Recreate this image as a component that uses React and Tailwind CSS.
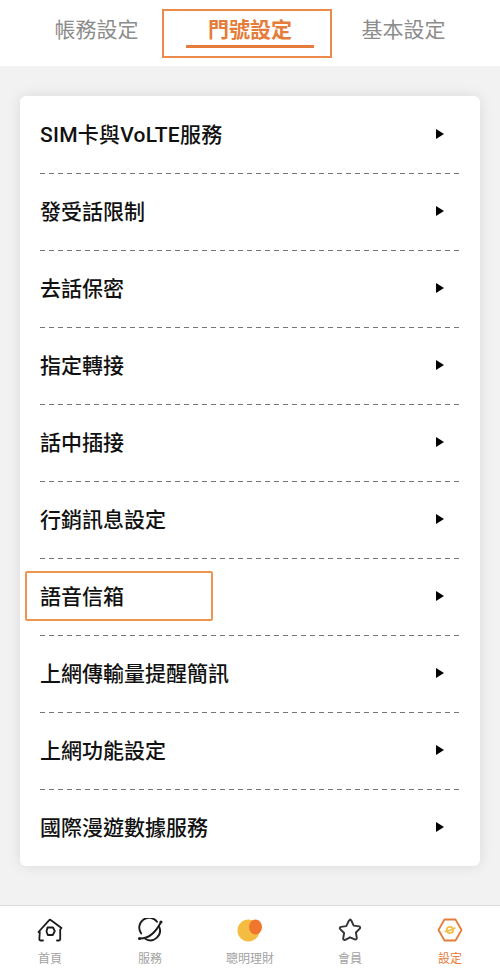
const rows = [
  "SIM卡與VoLTE服務",
  "發受話限制",
  "去話保密",
  "指定轉接",
  "話中插接",
  "行銷訊息設定",
  "語音信箱",
  "上網傳輸量提醒簡訊",
  "上網功能設定",
  "國際漫遊數據服務",
];

const HomeIcon = () => (
  <svg width="26" height="24" viewBox="0 0 26 24" fill="none" stroke="#1c1c1c" strokeWidth="1.800" strokeLinecap="round" strokeLinejoin="round">
    <path d="M6 22.500H3.500c-.8 0-1.200-.5-1.200-1.200l.5-7.300H1.500L12 2.300c.6-.6 1.400-.6 2 0L24.500 10l-1.300 1.500v9.800c0 .7-.4 1.200-1.200 1.200H20" />
    <path d="M10.500 9.500h5.500l1.800 3.500-2 4h-5l-1.300-3.500z" />
  </svg>
);

const PlanetIcon = () => (
  <svg width="26" height="24" viewBox="0 0 26 24" fill="none" stroke="#1c1c1c" strokeWidth="1.900" strokeLinecap="round">
    <path d="M4.200 15.500A9.700 9.700 0 0 1 20 3.800" />
    <path d="M22.300 9a9.700 9.700 0 0 1-13.800 12" />
    <path d="M2.500 20.500c8 .3 16-5.500 21.500-16.500" />
    <circle cx="2.500" cy="20.500" r="1.500" fill="#1c1c1c" stroke="none" />
    <circle cx="24" cy="4" r="1.500" fill="#1c1c1c" stroke="none" />
  </svg>
);

const CoinsIcon = () => (
  <svg width="26" height="24" viewBox="0 0 26 24">
    <circle cx="11.500" cy="12.500" r="11" fill="#f5bc42" />
    <ellipse cx="18.500" cy="9" rx="6.500" ry="7.500" fill="#f0752d" />
  </svg>
);

const StarIcon = () => (
  <svg width="24" height="24" viewBox="0 0 24 24" fill="none" stroke="#33343a" strokeWidth="1.900" strokeLinejoin="round">
    <path d="M12 1.500c.6 0 1 .4 1.300 1l2.400 5.100 5.400.8c1.100.2 1.500 1.400.7 2.200l-3.900 3.900.9 5.500c.2 1.100-1 1.900-2 1.400L12 19.300l-4.800 2.600c-1 .5-2.200-.3-2-1.400l.9-5.500-3.900-3.900c-.8-.8-.4-2 .7-2.200l5.400-.8 2.400-5.100c.3-.6.700-1 1.300-1z" />
  </svg>
);

const SettingIcon = () => (
  <svg width="26" height="24" viewBox="0 0 26 24" fill="none" strokeLinecap="round" strokeLinejoin="round">
    <path d="M7.500 1.500h11L24.500 12l-6 10.500h-11L1.500 12z" stroke="#e57c3a" strokeWidth="1.800" />
    <circle cx="13" cy="12" r="3.200" stroke="#f3be4a" strokeWidth="1.800" />
    <path d="M8 13.500c2-.2 7-2 10-3.500" stroke="#f3be4a" strokeWidth="1.400" />
  </svg>
);

const navItems = [
  { label: "首頁", icon: <HomeIcon /> },
  { label: "服務", icon: <PlanetIcon /> },
  { label: "聰明理財", icon: <CoinsIcon /> },
  { label: "會員", icon: <StarIcon /> },
  { label: "設定", icon: <SettingIcon />, active: true },
];

export default function App() {
  return (
    <div className="relative flex h-[975px] w-[500px] flex-col overflow-hidden bg-[#f2f2f2] font-['Roboto','Noto_Sans_CJK_TC',sans-serif]">
      {/* Tabs */}
      <div className="flex h-[66px] items-start justify-center bg-white">
        <div className="flex h-[60px] w-[153.5px] items-center justify-center pt-[2px] text-[21px] text-[#8c8c8c]">帳務設定</div>
        <div className="relative flex h-[60px] w-[153.5px] items-center justify-center pt-[2px] text-[21px] font-bold text-[#e57c3a]">
          門號設定
          <div className="absolute left-[13px] top-[45px] h-[3px] w-[128px] bg-[#e57c3a]" />
        </div>
        <div className="flex h-[60px] w-[153.5px] items-center justify-center pt-[2px] text-[21px] text-[#8c8c8c]">基本設定</div>
      </div>
      <div className="absolute left-[162px] top-[9px] h-[49px] w-[170px] border-2 border-[#ec8a4c]" />

      {/* Settings list */}
      <div className="flex-1 px-5 pt-[30px]">
        <div className="rounded-md bg-white px-5 shadow-[0_0_14px_rgba(0,0,0,0.1)]">
          {rows.map((row, i) => (
            <div key={row} className="relative flex h-[77px] items-center justify-between">
              <span className={`pt-[2px] text-[21px] font-medium leading-none text-[#111111] ${i === 0 ? "tracking-[0.25px]" : ""}`}>{row}</span>
              <svg width="8" height="10" viewBox="0 0 8 10" className="mr-[16px] mb-[1px]">
                <path d="M0 0l8 5-8 5z" fill="#000000" />
              </svg>
              {i < rows.length - 1 && (
                <div className="absolute bottom-[-1px] left-0 h-px w-full bg-[repeating-linear-gradient(90deg,#777_0,#777_5px,transparent_5px,transparent_9px)]" />
              )}
            </div>
          ))}
        </div>
      </div>
      <div className="absolute left-[25px] top-[571px] h-[50px] w-[188px] rounded-[2px] border-2 border-[#f0934f]" />

      {/* Bottom nav */}
      <div className="flex h-[70px] border-t border-[#dcdcdc] bg-white">
        {navItems.map((item) => (
          <div key={item.label} className="flex w-[100px] flex-col items-center">
            <div className="mt-[10px] flex h-[28px] items-center justify-center">{item.icon}</div>
            <span className={`mt-[7px] text-[12px] leading-[16px] ${item.active ? "text-[#e57c3a]" : "text-[#a3a3a3]"}`}>{item.label}</span>
          </div>
        ))}
      </div>
    </div>
  );
}
